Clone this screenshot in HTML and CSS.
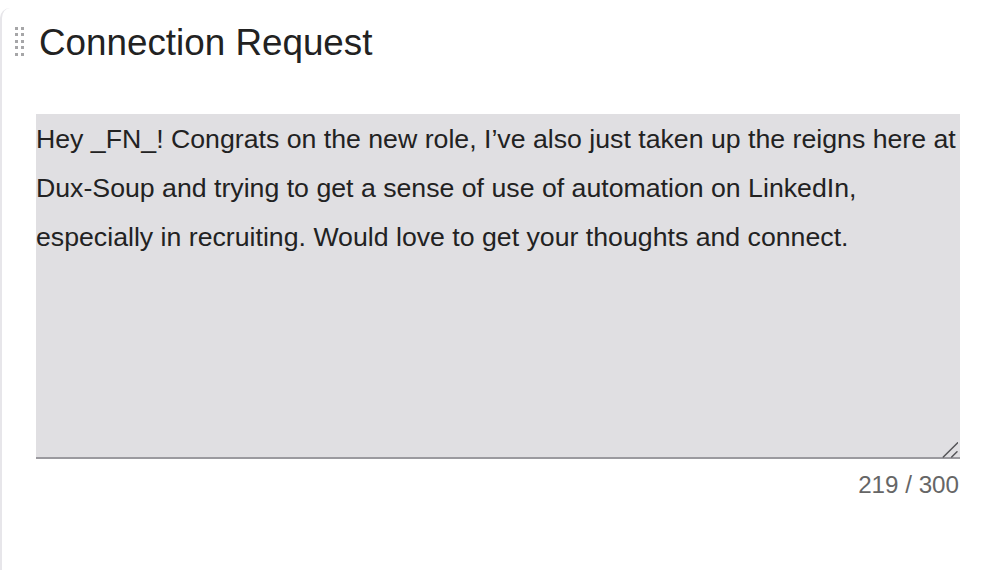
FILE: index.html
```html
<!DOCTYPE html>
<html>
<head>
<meta charset="utf-8">
<link rel="stylesheet" href="styles.css">
</head>
<body>
<div class="card">
  <div class="header">
    <span class="grip"><i></i><i></i><i></i><i></i><i></i><i></i><i></i><i></i><i></i><i></i></span>
    <h1 class="title">Connection Request</h1>
  </div>
  <div class="field">
    <div class="box">
      <textarea class="message" readonly>Hey _FN_! Congrats on the new role, I’ve also just taken up the reigns here at Dux-Soup and trying to get a sense of use of automation on LinkedIn, especially in recruiting. Would love to get your thoughts and connect.</textarea>
      <svg class="grip-resize" width="18" height="18" viewBox="0 0 18 18"><path d="M3.3 17 L17.7 2.7 M11.7 17 L17 11.7" stroke="#555558" stroke-width="1.5" fill="none" stroke-linecap="round"/></svg>
    </div>
    <div class="counter">219 / 300</div>
  </div>
</div>
</body>
</html>
```

FILE: styles.css
```css
html, body {
  margin: 0;
  padding: 0;
  background: #ffffff;
}
body {
  font-family: "Liberation Sans", Arial, sans-serif;
  color: #222222;
  width: 994px;
  height: 570px;
  overflow: hidden;
}
.card {
  margin-top: 8px;
  height: 562px;
  border-left: 2px solid #e7e6ea;
  border-top-left-radius: 10px;
  box-sizing: border-box;
  padding: 0 34px 0 34px;
}
.header {
  display: flex;
  align-items: center;
  height: 70px;
  margin-left: -21px;
}
.grip {
  display: grid;
  grid-template-columns: 3px 3px;
  grid-auto-rows: 3px;
  column-gap: 3px;
  row-gap: 3.5px;
  margin-right: 15px;
  margin-top: -4px;
}
.grip i {
  display: block;
  background: #a6a6a8;
}
.title {
  margin: 0;
  font-size: 36.8px;
  font-weight: 400;
  color: #222222;
  line-height: 40px;
}
.field {
  margin-top: 36px;
  width: 924px;
}
.box {
  position: relative;
}
.message {
  display: block;
  width: 924px;
  height: 345px;
  box-sizing: border-box;
  margin: 0;
  padding: 1px 0 0 0;
  border: none;
  border-bottom: 2px solid #9b9a9f;
  background: #e0dfe2;
  font-family: "Liberation Sans", Arial, sans-serif;
  font-size: 26.7px;
  line-height: 49px;
  color: #222222;
  outline: none;
  resize: none;
  overflow: hidden;
}
.grip-resize {
  position: absolute;
  right: 2px;
  bottom: 1px;
}
.counter {
  text-align: right;
  font-size: 24.2px;
  color: #666666;
  margin-top: 12px;
  padding-right: 1px;
}
```
